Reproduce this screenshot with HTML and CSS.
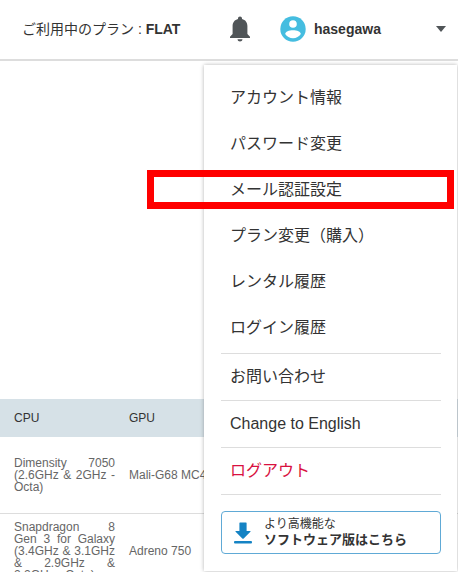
FILE: index.html
```
<!DOCTYPE html>
<html lang="ja">
<head>
    <meta charset="UTF-8">
    <meta name="viewport" content="width=device-width, initial-scale=1.0">
    <title>アカウントメニュー</title>
    <link rel="stylesheet" href="styles.css">
</head>
<body>
    <header class="header">
        <p class="plan">ご利用中のプラン : <b>FLAT</b></p>
        <button type="button" class="bell" aria-label="お知らせ">
            <svg width="20" height="26" viewBox="0 0 20 26">
                <path fill="#505558" d="M10 0.5C11.2 0.5 12 1.3 12 2.4V3C15.3 3.8 17.4 6.4 17.4 10V18L20 20.7V22H0V20.7L2.6 18V10C2.6 6.4 4.7 3.8 8 3V2.4C8 1.3 8.8 0.5 10 0.5ZM7.5 23.3H12.5C12.3 24.7 11.3 25.5 10 25.5S7.7 24.7 7.5 23.3Z"/>
            </svg>
        </button>
        <button type="button" class="account">
            <svg width="26" height="26" viewBox="0 0 26 26">
                <circle cx="13" cy="13" r="12.7" fill="#45bde0"/>
                <circle cx="13" cy="8" r="3.8" fill="#fff"/>
                <path fill="#fff" d="M13 14.2C17 14.2 20.8 15.7 20.8 18C19.2 20.6 16.3 22.2 13 22.2S6.8 20.6 5.2 18C5.2 15.7 9 14.2 13 14.2Z"/>
            </svg>
            <span class="name">hasegawa</span>
            <svg width="10" height="6" viewBox="0 0 10 6">
                <path fill="#505558" d="M0 0H10L5 6Z"/>
            </svg>
        </button>

        <nav class="menu">
            <ul class="menu-list">
                <li><a href="#">アカウント情報</a></li>
                <li><a href="#">パスワード変更</a></li>
                <li class="marked"><a href="#">メール認証設定</a></li>
                <li><a href="#">プラン変更（購入）</a></li>
                <li><a href="#">レンタル履歴</a></li>
                <li><a href="#">ログイン履歴</a></li>
            </ul>
            <ul class="menu-list lined">
                <li><a href="#">お問い合わせ</a></li>
                <li><a href="#">Change to English</a></li>
                <li><a href="#" class="logout">ログアウト</a></li>
            </ul>
            <a href="#" class="download">
                <svg width="18" height="22" viewBox="0 0 18 22">
                    <path fill="#1583c4" d="M6 0.5H12Q12.6 0.5 12.6 1.1V9H16.2Q17 9 16.4 9.7L9.7 16.5Q9 17.1 8.3 16.5L1.6 9.7Q1 9 1.8 9H5.4V1.1Q5.4 0.5 6 0.5Z"/>
                    <rect x="0" y="19" width="18" height="2.4" rx="1" fill="#1583c4"/>
                </svg>
                <span>より高機能な<br><b>ソフトウェア版はこちら</b></span>
            </a>
        </nav>
    </header>

    <main class="content">
        <table class="devices">
            <thead>
                <tr>
                    <th class="cpu">CPU</th>
                    <th>GPU</th>
                </tr>
            </thead>
            <tbody>
                <tr>
                    <td class="cpu">Dimensity 7050 (2.6GHz &amp; 2GHz - Octa)</td>
                    <td>Mali-G68 MC4</td>
                </tr>
                <tr>
                    <td class="cpu">Snapdragon 8 Gen 3 for Galaxy (3.4GHz &amp; 3.1GHz &amp; 2.9GHz &amp; 2.2GHz - Octa)</td>
                    <td>Adreno 750</td>
                </tr>
            </tbody>
        </table>
    </main>
</body>
</html>
```

FILE: styles.css
```
* {
    box-sizing: border-box;
}

body {
    display: flex;
    flex-direction: column;
    height: 100vh;
    margin: 0;
    overflow: hidden;
    font-family: "Liberation Sans", "Noto Sans CJK JP", sans-serif;
    color: #333;
    background-color: #fff;
}

a {
    color: inherit;
    text-decoration: none;
}

button {
    padding: 0;
    border: none;
    background: none;
    font-family: inherit;
    color: inherit;
    cursor: pointer;
}

/* ヘッダー */
.header {
    position: relative;
    flex: none;
    display: flex;
    align-items: center;
    height: 61px;
    padding: 0 12px 2px 22px;
    border-bottom: 2px solid #ddd;
}

.plan {
    flex: none;
    width: 208px;
    margin: 0;
    font-size: 14px;
    line-height: 20px;
}

.bell {
    flex: none;
    display: flex;
}

.account {
    flex: 1;
    display: flex;
    align-items: center;
    gap: 8px;
    margin-left: 30px;
}

.name {
    flex: 1;
    text-align: left;
    font-size: 14px;
    font-weight: bold;
}

/* アカウントメニュー */
.menu {
    position: absolute;
    top: 65px;
    right: 1px;
    z-index: 1;
    width: 253px;
    padding: 10px 16px 17px 17px;
    background-color: #fff;
    box-shadow: 0 0 4px rgba(0, 0, 0, 0.3);
}

.menu-list {
    margin: 0;
    padding: 0 0 2px;
    list-style: none;
    font-size: 16px;
}

.menu-list li {
    position: relative;
}

.menu-list a {
    display: block;
    padding: 0 9px;
    line-height: 46px;
}

.lined {
    padding: 0;
    border-bottom: 1px solid #ddd;
}

.lined li {
    border-top: 1px solid #ddd;
}

/* 赤枠 */
.marked::after {
    content: "";
    position: absolute;
    top: 3px;
    bottom: 4px;
    left: -74px;
    right: -13px;
    border: 7px solid #f00;
    pointer-events: none;
}

.menu-list .logout {
    color: #d8113f;
}

.download {
    display: flex;
    align-items: center;
    gap: 12px;
    height: 43px;
    margin-top: 16px;
    padding: 0 12px;
    border: 1px solid #60aad6;
    border-radius: 4px;
    font-size: 12px;
    line-height: 15px;
}

.download b {
    font-size: 13px;
}

/* 端末一覧 */
.content {
    padding-top: 338px;
}

.devices {
    width: 100%;
    border-collapse: collapse;
    table-layout: fixed;
    font-size: 12px;
    line-height: 12px;
}

.devices th {
    height: 38px;
    padding: 0 9px;
    background-color: #d6e1e7;
    font-weight: normal;
    text-align: left;
}

.devices td {
    height: 76px;
    padding: 0 9px;
    border-bottom: 1px solid #ddd;
    color: #666;
}

.devices .cpu {
    width: 120px;
    padding: 0 5px 0 14px;
    text-align: justify;
}
```
